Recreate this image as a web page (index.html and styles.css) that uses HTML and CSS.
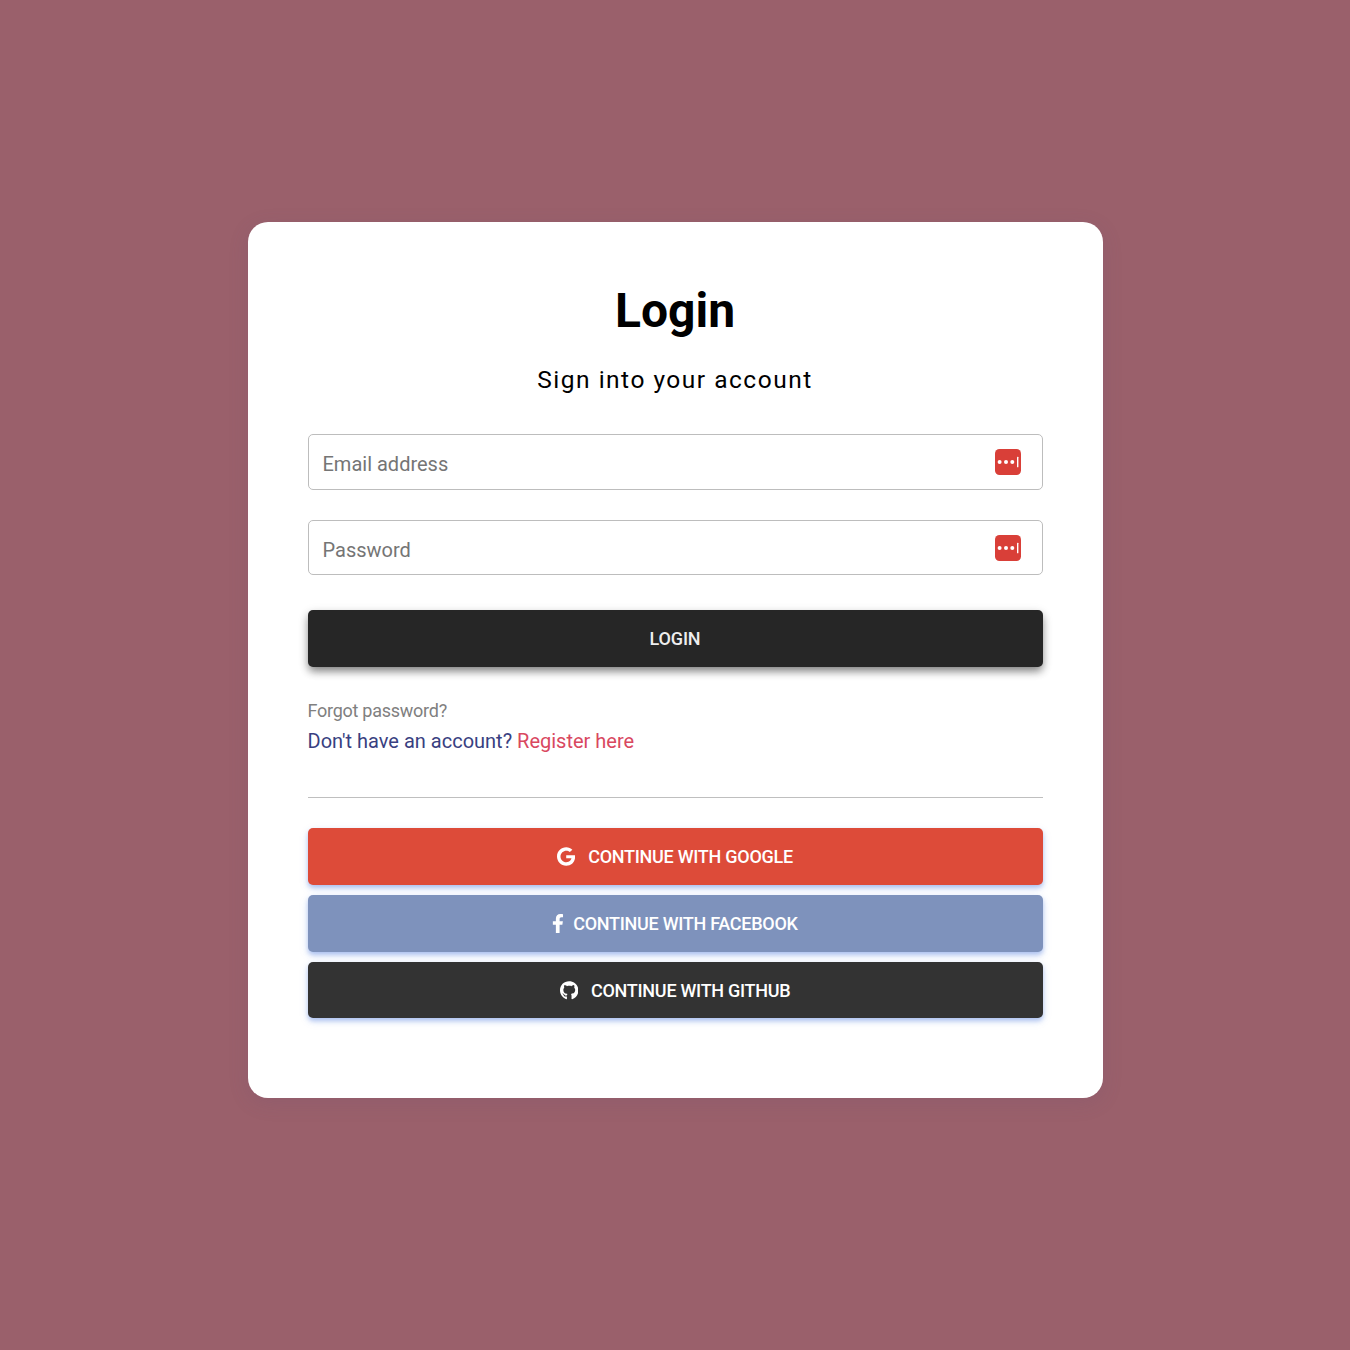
FILE: index.html
```html
<!DOCTYPE html>
<html lang="en">
<head>
<meta charset="utf-8">
<title>Login</title>
<link rel="stylesheet" href="styles.css">
</head>
<body>
<main class="card">
  <h1 class="title">Login</h1>
  <p class="subtitle">Sign into your account</p>
  <form class="form">
    <div class="field">
      <input class="input" type="email" placeholder="Email address" aria-label="Email address">
      <svg class="vault" viewBox="0 0 26 26" aria-hidden="true"><rect width="26" height="26" rx="4.5" fill="#d93f38"/><g fill="#fff"><circle cx="4.6" cy="13" r="2"/><circle cx="11" cy="13" r="2"/><circle cx="17.3" cy="13" r="2"/><rect x="22" y="7.7" width="1.4" height="10.6" rx=".6"/></g></svg>
    </div>
    <div class="field field-password">
      <input class="input" type="password" placeholder="Password" aria-label="Password">
      <svg class="vault" viewBox="0 0 26 26" aria-hidden="true"><rect width="26" height="26" rx="4.5" fill="#d93f38"/><g fill="#fff"><circle cx="4.6" cy="13" r="2"/><circle cx="11" cy="13" r="2"/><circle cx="17.3" cy="13" r="2"/><rect x="22" y="7.7" width="1.4" height="10.6" rx=".6"/></g></svg>
    </div>
    <button class="btn btn-login" type="button">Login</button>
  </form>
  <a class="forgot">Forgot password?</a>
  <p class="register">Don't have an account? <a class="register-link">Register here</a></p>
  <hr class="divider">
  <div class="social">
    <button class="btn btn-google" type="button"><svg class="icon icon-google" viewBox="0 0 488 512" aria-hidden="true"><path fill="currentColor" d="M488 261.8C488 403.3 391.1 504 248 504 110.8 504 0 393.2 0 256S110.8 8 248 8c66.8 0 123 24.5 166.3 64.9l-67.5 64.9C258.5 52.6 94.3 116.6 94.3 256c0 86.5 69.1 156.6 153.7 156.6 98.2 0 135-70.4 140.8-106.9H248v-85.3h236.1c2.3 12.7 3.9 24.9 3.9 41.4z"/></svg>Continue with Google</button>
    <button class="btn btn-facebook" type="button"><svg class="icon icon-facebook" viewBox="0 0 320 512" aria-hidden="true"><path fill="currentColor" d="M279.14 288l14.22-92.66h-88.91v-60.13c0-25.35 12.42-50.06 52.24-50.06h40.42V6.26S260.43 0 225.36 0c-73.22 0-121.08 44.38-121.08 124.72v70.62H22.89V288h81.39v224h100.17V288z"/></svg>Continue with Facebook</button>
    <button class="btn btn-github" type="button"><svg class="icon icon-github" viewBox="0 0 496 512" aria-hidden="true"><path fill="currentColor" d="M165.900 397.400c0 2-2.300 3.600-5.200 3.600-3.300.3-5.600-1.300-5.600-3.600 0-2 2.300-3.600 5.200-3.600 3-.3 5.600 1.300 5.600 3.600zM244.800 8C106.100 8 0 113.300 0 252c0 110.900 69.800 205.800 169.500 239.200 12.800 2.300 17.300-5.600 17.300-12.100 0-6.200-.3-40.400-.3-61.400 0 0-70 15-84.700-29.800 0 0-11.400-29.100-27.800-36.600 0 0-22.900-15.700 1.600-15.400 0 0 24.900 2 38.600 25.800 21.900 38.600 58.600 27.500 72.900 20.900 2.300-16 8.800-27.100 16-33.700-55.900-6.200-112.300-14.300-112.300-110.500 0-27.500 7.600-41.300 23.600-58.900-2.600-6.500-11.100-33.300 2.600-67.900 20.900-6.500 69 27 69 27 20-5.600 41.500-8.500 62.800-8.500s42.800 2.900 62.800 8.500c0 0 48.100-33.600 69-27 13.700 34.700 5.200 61.400 2.600 67.900 16 17.700 25.800 31.500 25.800 58.900 0 96.500-58.900 104.200-114.800 110.500 9.200 7.900 17 22.900 17 46.400 0 33.700-.3 75.400-.3 83.600 0 6.500 4.600 14.400 17.300 12.100C428.200 457.800 496 362.900 496 252 496 113.300 383.500 8 244.800 8z"/></svg>Continue with GitHub</button>
  </div>
</main>
</body>
</html>
```

FILE: styles.css
```css
* {
  box-sizing: border-box;
}

body {
  margin: 0;
  min-height: 1350px;
  padding-top: 222px;
  background: #9a606b;
  font-family: Roboto, "Liberation Sans", sans-serif;
  font-size: 20px;
  line-height: 30px;
}

.card {
  display: flex;
  flex-direction: column;
  width: 855px;
  height: 876px;
  margin: 0 auto;
  padding: 60px;
  border-radius: 20px;
  background: #fff;
  box-shadow: 0 5px 20px rgba(98, 76, 120, 0.16);
}

.title {
  margin: 0;
  color: #000;
  font-size: 48px;
  font-weight: 700;
  line-height: 58px;
  text-align: center;
}

.subtitle {
  margin: 21px 0 33px;
  color: #000;
  font-size: 24.5px;
  line-height: 38px;
  letter-spacing: 1.5px;
  text-align: center;
}

.form {
  display: flex;
  flex-direction: column;
  margin-top: 2px;
}

.field {
  display: flex;
  align-items: center;
  height: 56px;
  margin-bottom: 30px;
  padding: 0 21px 0 14px;
  border: 1px solid #bdbdbd;
  border-radius: 5px;
}

.field-password {
  height: 55px;
  margin-bottom: 35px;
}

.input {
  flex: 1;
  min-width: 0;
  padding: 4px 0 0;
  border: 0;
  outline: 0;
  background: transparent;
  font: inherit;
}

.input::placeholder {
  color: #757575;
  opacity: 1;
}

.vault {
  width: 26px;
  height: 26px;
}

.btn {
  display: flex;
  align-items: center;
  justify-content: center;
  width: 100%;
  height: 57px;
  padding: 0;
  border: 0;
  border-radius: 5px;
  color: #fff;
  font-family: inherit;
  font-size: 18px;
  font-weight: 500;
  line-height: 27px;
  letter-spacing: -0.27px;
  text-transform: uppercase;
  box-shadow: 0 3px 5px rgba(60, 110, 220, 0.4), 0 3px 12px rgba(60, 110, 220, 0.08);
}

.btn-login {
  background: #262626;
  color: #eee;
  letter-spacing: -0.15px;
  box-shadow: 0 5px 8px -1px rgba(0, 0, 0, 0.45), 0 3px 12px rgba(0, 0, 0, 0.12);
}

.forgot {
  margin-top: 30px;
  color: #808080;
  font-size: 18px;
  line-height: 27px;
  letter-spacing: -0.26px;
}

.register {
  margin: 2px 0 41px;
  color: #393f81;
}

.register-link {
  color: #d9485f;
}

.divider {
  width: 100%;
  height: 1px;
  margin: 0 0 30px;
  border: 0;
  background: #bfbfbf;
}

.social {
  display: flex;
  flex-direction: column;
  gap: 10px;
}

.btn-google {
  background: #dd4b39;
}

.btn-facebook {
  background: #7e92bc;
}

.btn-github {
  height: 56px;
  background: #333;
}

.icon {
  height: 19px;
  margin-right: 13px;
}

.icon-facebook {
  margin-right: 9px;
}
```
